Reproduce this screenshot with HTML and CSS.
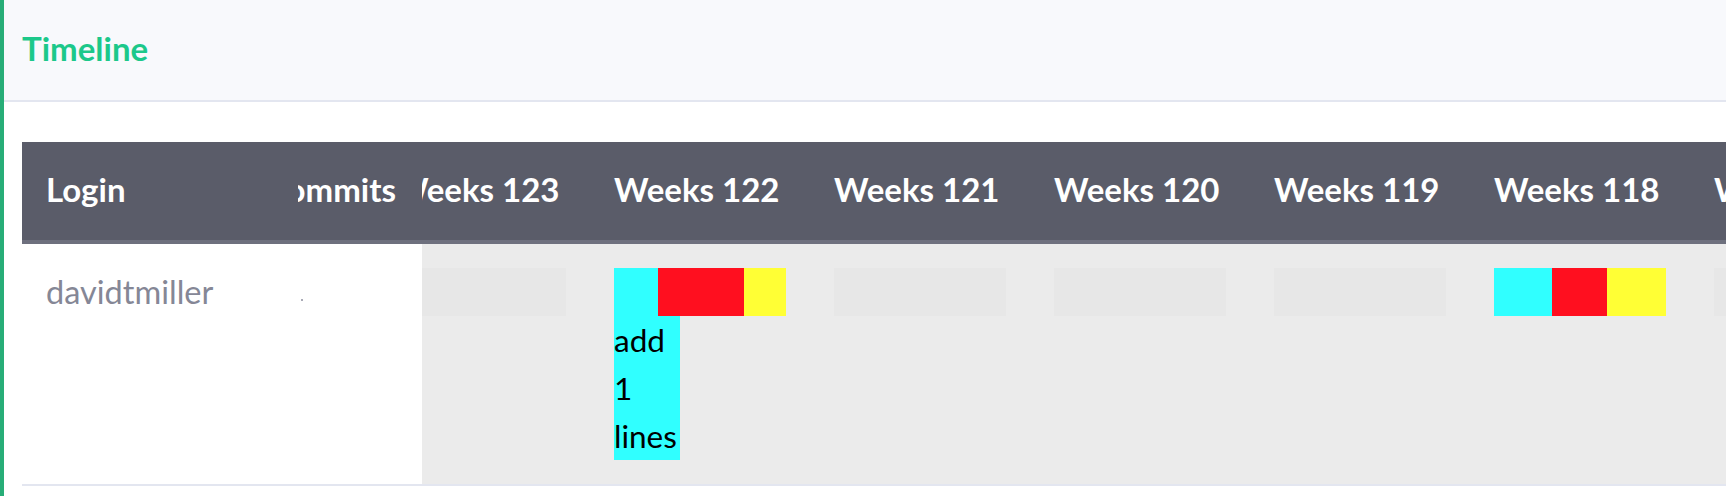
FILE: index.html
```html
<!DOCTYPE html>
<html lang="en">
<head>
<meta charset="utf-8">
<title>Timeline</title>
<link rel="stylesheet" href="styles.css">
</head>
<body>
<div class="card">
  <div class="card-header">
    <h6 class="card-title">Timeline</h6>
  </div>
  <div class="card-body">
    <div class="table">
      <div class="fixed-cols">
        <div class="thead-row">
          <div class="th th-login">Login</div>
          <div class="th th-commits"><span>Commits</span></div>
        </div>
        <div class="tbody-row">
          <div class="td td-login">davidtmiller</div>
          <div class="td td-commits"><span class="dot"></span></div>
        </div>
      </div>
      <div class="scroll-cols">
        <div class="scroll-inner">
          <div class="thead-row">
            <div class="th th-week">Weeks 123</div>
            <div class="th th-week">Weeks 122</div>
            <div class="th th-week">Weeks 121</div>
            <div class="th th-week">Weeks 120</div>
            <div class="th th-week">Weeks 119</div>
            <div class="th th-week">Weeks 118</div>
            <div class="th th-week">Weeks 117</div>
          </div>
          <div class="tbody-row week-row">
            <div class="td td-week"><div class="empty"></div></div>
            <div class="td td-week">
              <div class="bar">
                <div class="seg seg-add" style="width:44px">
                  <div class="seg-fill"></div>
                  <span class="seg-label">add 1 lines</span>
                </div>
                <div class="seg seg-del" style="width:86px"><div class="seg-fill"></div></div>
                <div class="seg seg-mod" style="width:42px"><div class="seg-fill"></div></div>
              </div>
            </div>
            <div class="td td-week"><div class="empty"></div></div>
            <div class="td td-week"><div class="empty"></div></div>
            <div class="td td-week"><div class="empty"></div></div>
            <div class="td td-week">
              <div class="bar">
                <div class="seg seg-add" style="width:58px"><div class="seg-fill"></div></div>
                <div class="seg seg-del" style="width:55px"><div class="seg-fill"></div></div>
                <div class="seg seg-mod" style="width:59px"><div class="seg-fill"></div></div>
              </div>
            </div>
            <div class="td td-week"><div class="empty"></div></div>
          </div>
        </div>
      </div>
    </div>
  </div>
</div>
</body>
</html>
```
FILE: styles.css
```css
* { box-sizing: border-box; }
html, body {
  margin: 0;
  padding: 0;
  background: #ffffff;
  font-family: "Lato", "Open Sans", sans-serif;
  overflow: hidden;
}
.card {
  border-left: 4px solid #27ad77;
  min-height: 496px;
  background: #ffffff;
}
.card-header {
  height: 102px;
  background: #f8f9fc;
  border-bottom: 2px solid #e3e6f0;
  display: flex;
  align-items: center;
  padding-left: 18px;
}
.card-title {
  margin: 0;
  font-size: 33px;
  font-weight: 700;
  color: #1cc88a;
  line-height: 1;
  padding-bottom: 4px;
}
.card-body {
  padding: 40px 0 0 18px;
}
.table {
  display: flex;
  overflow: hidden;
  border-bottom: 2px solid #e3e6f0;
}
.fixed-cols {
  flex: 0 0 400px;
  background: #ffffff;
}
.scroll-cols {
  flex: 1 1 auto;
  overflow: hidden;
  background: #ebebeb;
}
.scroll-inner {
  margin-left: -52px;
  width: max-content;
}
.thead-row {
  display: flex;
  height: 102px;
  background: #5a5c69;
  border-bottom: 4px solid #6e707e;
}
.tbody-row {
  display: flex;
  height: 240px;
}
.th {
  display: flex;
  align-items: center;
  padding: 0 24px 4px;
  color: #ffffff;
  font-size: 33px;
  font-weight: 700;
  white-space: nowrap;
  overflow: hidden;
}
.th-login { width: 276px; }
.th-commits {
  width: 124px;
  justify-content: flex-end;
  padding: 0 26px 4px 0;
}
.th-week { width: 220px; }
.td {
  padding: 24px;
  font-size: 32.5px;
  line-height: 48px;
  color: #858796;
}
.td-login { width: 276px; }
.td-commits { width: 124px; padding: 0; }
.dot {
  display: block;
  width: 2px;
  height: 2px;
  margin: 55px 0 0 3px;
  background: #a9aab6;
}
.td-week { width: 220px; }
.empty {
  width: 172px;
  height: 48px;
  background: #e7e7e7;
}
.bar {
  display: flex;
  align-items: flex-start;
}
.seg { flex: 0 0 auto; }
.seg-fill { height: 48px; }
.seg-add .seg-fill, .seg-label { background: #30ffff; }
.seg-del .seg-fill { background: #ff0f1f; }
.seg-mod .seg-fill { background: #ffff35; }
.seg-label {
  display: block;
  width: 66px;
  color: #000000;
  font-size: 31.5px;
  line-height: 48px;
}
```
